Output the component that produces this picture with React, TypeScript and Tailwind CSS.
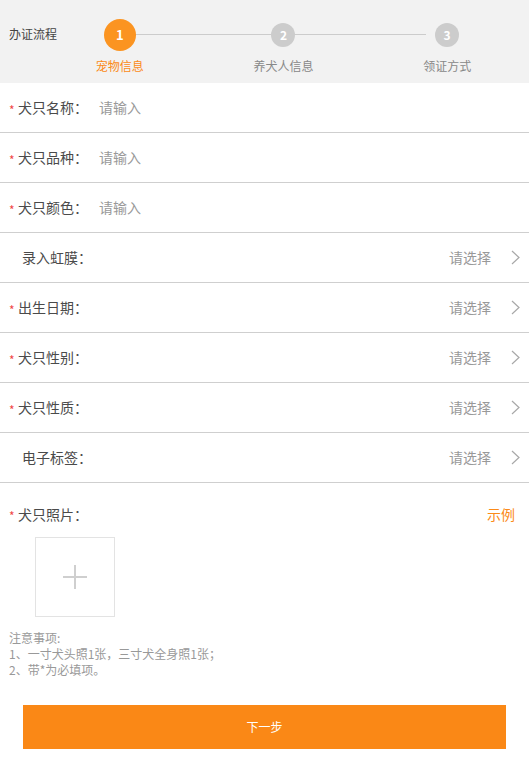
import React from "react";

const font = { fontFamily: '"Noto Sans CJK SC", "Noto Sans", sans-serif' };

function Chevron() {
  return (
    <svg width="9" height="15" viewBox="0 0 9 15" className="block">
      <path d="M1 1 L8 7.5 L1 14" fill="none" stroke="#a8a8a8" strokeWidth="1.2" />
    </svg>
  );
}

type Row = { label: string; required: boolean; kind: "input" | "select" };

const rows: Row[] = [
  { label: "犬只名称：", required: true, kind: "input" },
  { label: "犬只品种：", required: true, kind: "input" },
  { label: "犬只颜色：", required: true, kind: "input" },
  { label: "录入虹膜：", required: false, kind: "select" },
  { label: "出生日期：", required: true, kind: "select" },
  { label: "犬只性别：", required: true, kind: "select" },
  { label: "犬只性质：", required: true, kind: "select" },
  { label: "电子标签：", required: false, kind: "select" },
];

function Label({ label, required }: { label: string; required: boolean }) {
  if (required) {
    return (
      <div className="flex items-center pl-[9px]">
        <span className="w-[9px] text-[12px] leading-none text-[#f04848] mt-[4px]">*</span>
        <span className="text-[14px] text-[#4a4a4a] w-[81px] whitespace-nowrap">{label}</span>
      </div>
    );
  }
  return (
    <div className="flex items-center pl-[22px]">
      <span className="text-[14px] text-[#4a4a4a] whitespace-nowrap">{label}</span>
    </div>
  );
}

export default function App() {
  const steps = [
    { n: "1", t: "宠物信息", active: true },
    { n: "2", t: "养犬人信息", active: false },
    { n: "3", t: "领证方式", active: false },
  ];
  return (
    <div style={font} className="w-[529px] min-h-[758px] bg-white">
      <div className="h-[83px] bg-[#f2f2f2] flex">
        <div className="w-[38px] shrink-0 pl-[9px] pt-[26px] whitespace-nowrap text-[12px] leading-[16px] text-[#444]">
          办证流程
        </div>
        <div className="relative flex-1 grid grid-cols-3">
          <div className="absolute left-[83px] w-[305px] top-[34px] h-px bg-[#cccccc]" />
          {steps.map((s) => (
            <div key={s.n} className="relative flex flex-col items-center">
              <div className="mt-[19px] h-[32px] flex items-center justify-center">
                {s.active ? (
                  <div className="w-[32px] h-[32px] rounded-full bg-[#fb9421] flex items-center justify-center text-white text-[13px] font-bold">
                    {s.n}
                  </div>
                ) : (
                  <div className="w-[24px] h-[24px] rounded-full bg-[#cccccc] flex items-center justify-center text-white text-[12px] font-bold">
                    {s.n}
                  </div>
                )}
              </div>
              <div
                className={`mt-[7px] text-[12px] leading-[16px] whitespace-nowrap ${
                  s.active ? "text-[#fb8a18]" : "text-[#888]"
                }`}
              >
                {s.t}
              </div>
            </div>
          ))}
        </div>
      </div>

      {rows.map((r) => (
        <div key={r.label} className="h-[50px] border-b border-[#cfcfcf] flex items-center">
          <Label label={r.label} required={r.required} />
          {r.kind === "input" ? (
            <span className="text-[14px] text-[#999]">请输入</span>
          ) : (
            <div className="ml-auto flex items-center pr-[9px]">
              <span className="text-[14px] text-[#999]">请选择</span>
              <span className="ml-[20px]">
                <Chevron />
              </span>
            </div>
          )}
        </div>
      ))}

      <div className="pt-[21px]">
        <div className="flex items-center h-[20px]">
          <Label label="犬只照片：" required={true} />
          <span className="ml-auto pr-[14px] text-[14px] text-[#fb8a18]">示例</span>
        </div>
        <div className="mt-[13px] ml-[35px] w-[80px] h-[80px] border border-[#e3e3e3] flex items-center justify-center">
          <svg width="26" height="26" viewBox="0 0 26 26">
            <path d="M13 1 V25 M1 13 H25" stroke="#cfcfcf" strokeWidth="2" />
          </svg>
        </div>
        <div className="mt-[13px] pl-[9px] text-[12px] leading-[16px] text-[#999]">
          <div>注意事项:</div>
          <div>1、一寸犬头照1张，三寸犬全身照1张；</div>
          <div>2、带*为必填项。</div>
        </div>
        <div className="mt-[27px] mx-[23px] h-[44px] bg-[#fa8816] flex items-center justify-center text-white text-[12px]">
          下一步
        </div>
      </div>
    </div>
  );
}
